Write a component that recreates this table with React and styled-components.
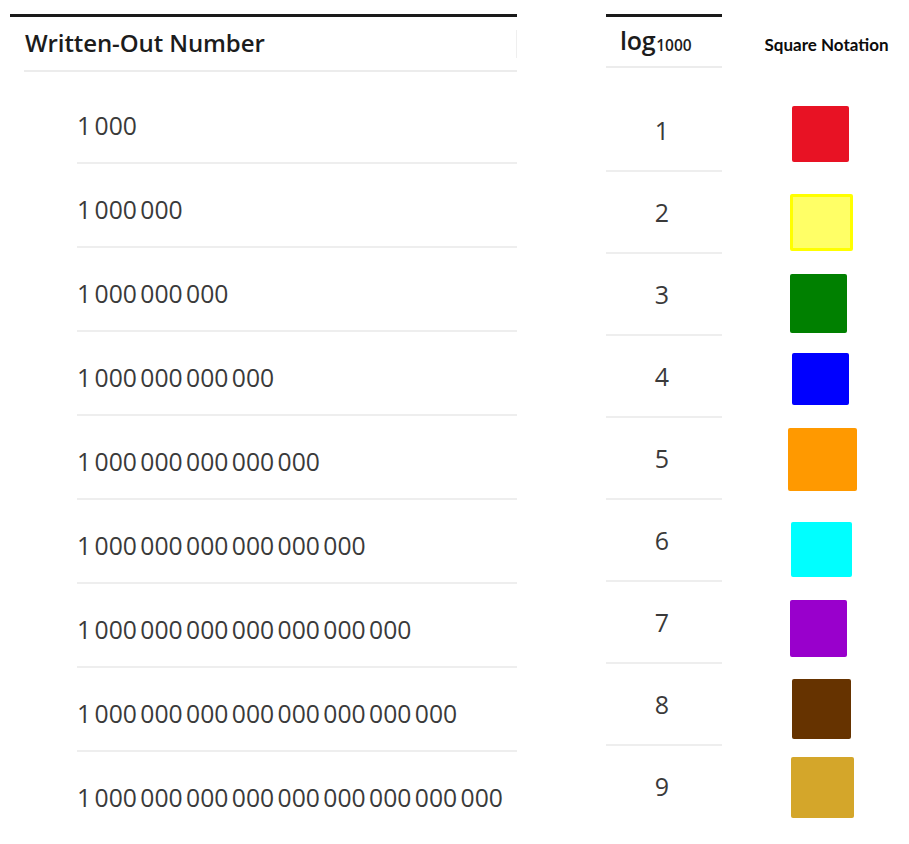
import React from "react";
import styled, { createGlobalStyle } from "styled-components";

const numbers = [
  "1 000",
  "1 000 000",
  "1 000 000 000",
  "1 000 000 000 000",
  "1 000 000 000 000 000",
  "1 000 000 000 000 000 000",
  "1 000 000 000 000 000 000 000",
  "1 000 000 000 000 000 000 000 000",
  "1 000 000 000 000 000 000 000 000 000",
];

// offset = distance from column's left edge, gap = space above the square
const squares = [
  { color: "#e81224", offset: 32, gap: 46, w: 57, h: 56 },
  { color: "#ffff66", border: "#ffff00", offset: 30, gap: 32, w: 63, h: 57 },
  { color: "#008000", offset: 30, gap: 23, w: 57, h: 59 },
  { color: "#0000ff", offset: 32, gap: 20, w: 57, h: 52 },
  { color: "#ff9900", offset: 28, gap: 23, w: 69, h: 63 },
  { color: "#00ffff", offset: 31, gap: 31, w: 61, h: 55 },
  { color: "#9900cc", offset: 30, gap: 23, w: 57, h: 57 },
  { color: "#663300", offset: 32, gap: 22, w: 59, h: 60 },
  { color: "#d4a62a", offset: 31, gap: 18, w: 63, h: 61 },
];

const GlobalStyle = createGlobalStyle`
  html, body {
    margin: 0;
    padding: 0;
    background: #ffffff;
  }
  body {
    font-family: "Open Sans", "Liberation Sans", sans-serif;
    color: #333333;
  }
`;

const Page = styled.div`
  display: flex;
  align-items: flex-start;
  padding: 14px 0 0 10px;
  width: 909px;
  height: 844px;
  box-sizing: border-box;
  overflow: hidden;
`;

const Table = styled.div`
  width: ${(p) => p.width}px;
  margin-left: ${(p) => p.gap || 0}px;
  border-top: 3px solid #1a1a1a;
  display: flex;
  flex-direction: column;
`;

const HeaderRow = styled.div`
  box-sizing: border-box;
  height: ${(p) => p.height}px;
  margin-left: ${(p) => p.indent || 0}px;
  padding-left: ${(p) => p.pad || 0}px;
  padding-bottom: 3px;
  border-bottom: 2px solid #ececec;
  display: flex;
  align-items: center;
  justify-content: space-between;
  color: #1c1c1c;
`;

const HeaderLabel = styled.span`
  font-size: 24px;
  font-weight: 600;
  letter-spacing: -0.1px;
`;

const Separator = styled.span`
  width: 1px;
  height: 28px;
  margin-top: 4px;
  background: #efefef;
`;

const Log = styled.span`
  font-size: 25px;
  font-weight: 600;
  letter-spacing: -0.3px;

  & > sub {
    font-size: 15.5px;
    font-weight: 600;
    vertical-align: -1px;
    letter-spacing: 0;
    margin-left: 1px;
  }
`;

const Body = styled.div`
  margin-top: ${(p) => p.top}px;
  margin-left: ${(p) => p.indent || 0}px;
  display: flex;
  flex-direction: column;
`;

const Row = styled.div`
  box-sizing: border-box;
  height: ${(p) => p.height}px;
  padding-top: ${(p) => p.shift || 0}px;
  border-bottom: 2px solid #eeeeee;
  display: flex;
  align-items: center;
  justify-content: ${(p) => (p.center ? "center" : "flex-start")};

  &:last-child {
    border-bottom-color: transparent;
  }
`;

const Num = styled.span`
  font-size: 24.7px;
  word-spacing: -3px;
  color: #3a3a3a;
  white-space: nowrap;
`;

const Digit = styled.span`
  font-size: 25px;
  font-weight: 500;
  color: #3a3a3a;
  padding-right: 4px;
`;

const SquareColumn = styled.div`
  width: 133px;
  margin-left: 38px;
  margin-top: -14px;
  display: flex;
  flex-direction: column;
  align-items: flex-start;
`;

const SquareTitle = styled.div`
  box-sizing: border-box;
  width: 100%;
  height: 60px;
  padding-top: 35px;
  text-align: center;
  font-family: Lato, "Liberation Sans", sans-serif;
  font-size: 17px;
  line-height: 19px;
  font-weight: 700;
  color: #0c0c0c;
  white-space: nowrap;
`;

const Square = styled.div`
  box-sizing: border-box;
  width: ${(p) => p.w}px;
  height: ${(p) => p.h}px;
  margin-top: ${(p) => p.gap}px;
  margin-left: ${(p) => p.offset}px;
  background: ${(p) => p.color};
  border: ${(p) => (p.border ? `3px solid ${p.border}` : "none")};
  border-radius: 2px;
`;

const App = () => {
  return (
    <>
      <GlobalStyle />
      <Page>
        <Table width={507}>
          <HeaderRow height={55} indent={14} pad={1}>
            <HeaderLabel>Written-Out Number</HeaderLabel>
            <Separator />
          </HeaderRow>
          <Body top={8} indent={67}>
            {numbers.map((n) => (
              <Row key={n} height={84} shift={8}>
                <Num>{n}</Num>
              </Row>
            ))}
          </Body>
        </Table>

        <Table width={116} gap={89}>
          <HeaderRow height={51} pad={14}>
            <Log>
              log<sub>1000</sub>
            </Log>
          </HeaderRow>
          <Body top={22}>
            {numbers.map((n, i) => (
              <Row key={n} height={82} center>
                <Digit>{i + 1}</Digit>
              </Row>
            ))}
          </Body>
        </Table>

        <SquareColumn>
          <SquareTitle>Square Notation</SquareTitle>
          {squares.map((s) => (
            <Square key={s.color} {...s} />
          ))}
        </SquareColumn>
      </Page>
    </>
  );
};

export default App;
